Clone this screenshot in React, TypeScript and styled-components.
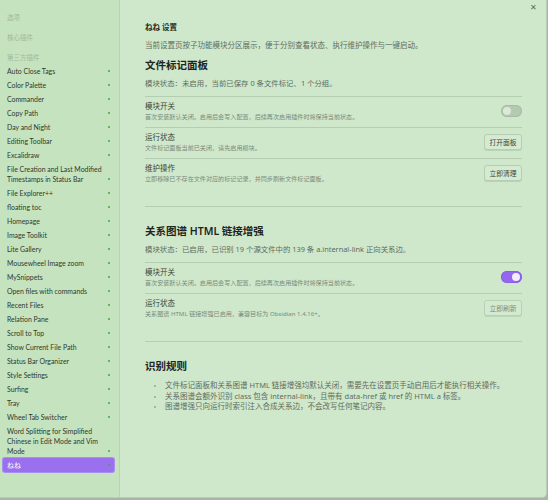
import React from "react";
import styled, { createGlobalStyle } from "styled-components";

const GlobalStyle = createGlobalStyle`
  html, body {
    margin: 0;
    padding: 0;
    background: #a9b3a7;
  }
  body {
    font-family: "Noto Sans", "Noto Sans CJK SC", sans-serif;
    -webkit-font-smoothing: antialiased;
  }
`;

const Stage = styled.div`
  width: 548px;
  height: 500px;
  overflow: hidden;
`;

const Modal = styled.div`
  position: relative;
  display: flex;
  width: 546px;
  height: 497px;
  background: #cfe8cb;
  border-right: 1px solid #bccbb9;
  border-bottom: 1px solid #bccbb9;
  border-bottom-right-radius: 5px;
  overflow: hidden;
`;

const Sidebar = styled.nav`
  width: 120px;
  flex-shrink: 0;
  background: #c6e3bf;
  border-right: 1px solid #b8d5b2;
  padding: 12px 0 0;
  box-sizing: border-box;
  font-family: Lato, "Noto Sans CJK SC", sans-serif;
`;

const GroupTitle = styled.div<{ $last?: boolean }>`
  font-family: "Noto Sans CJK SC", sans-serif;
  font-size: 6.5px;
  line-height: 10px;
  color: #9fb79b;
  padding: 0 7px;
  margin-bottom: ${({ $last }) => ($last ? "2px" : "10px")};
`;

const NavItem = styled.div<{ $active?: boolean }>`
  display: flex;
  align-items: flex-end;
  justify-content: space-between;
  margin: 0 5px 0 3px;
  padding: 2px 4px 2px 4px;
  border-radius: 2px;
  font-size: 6.9px;
  line-height: 10px;
  color: ${({ $active }) => ($active ? "#ffffff" : "#2d3a2c")};
  background: ${({ $active }) => ($active ? "#9b70ef" : "transparent")};
  box-shadow: ${({ $active }) => ($active ? "0 0 0 1px #a98ff2" : "none")};
`;

const NavLabel = styled.span`
  flex: 1;
`;

const Dot = styled.span`
  width: 2px;
  height: 2px;
  border-radius: 50%;
  background: #3aa846;
  margin: 0 0 4px 3px;
  flex-shrink: 0;
`;

const Content = styled.main`
  flex: 1;
  padding: 22px 24px 0 25px;
  color: #262b25;
`;

const CloseButton = styled.div`
  position: absolute;
  top: 2px;
  right: 9px;
  font-size: 8px;
  line-height: 10px;
  color: #5c6a5a;
`;

const PageTitle = styled.div`
  font-size: 7.5px;
  line-height: 10px;
  font-weight: 700;
`;

const Lead = styled.div`
  font-size: 7.5px;
  line-height: 10px;
  color: #5f6c5d;
  margin-top: 8px;
`;

const Section = styled.section<{ $divided?: boolean }>`
  padding-bottom: ${({ $divided }) => ($divided ? "17px" : "0")};
  border-bottom: ${({ $divided }) => ($divided ? "1px solid #b5cdb1" : "none")};
  margin-bottom: 17px;
`;

const Heading = styled.h2<{ $first?: boolean }>`
  margin: ${({ $first }) => ($first ? "8px" : "0")} 0 0;
  font-size: 10.5px;
  line-height: 14px;
  font-weight: 600;
  color: #1f241e;
`;

const Status = styled.div`
  font-size: 7.4px;
  line-height: 10px;
  color: #5f6c5d;
  margin: 6px 0 8px;
`;

const SettingRow = styled.div`
  display: flex;
  align-items: center;
  justify-content: space-between;
  border-top: 1px solid #b5cdb1;
  padding: 4px 0 6px;
`;

const SettingInfo = styled.div`
  display: flex;
  flex-direction: column;
  gap: 2px;
`;

const SettingName = styled.div`
  font-size: 7.5px;
  line-height: 10px;
  color: #3a4538;
`;

const SettingDesc = styled.div`
  font-size: 6.1px;
  line-height: 8px;
  color: #7b8a79;
`;

const Toggle = styled.div<{ $on?: boolean }>`
  width: 21px;
  height: 12px;
  border-radius: 6px;
  box-sizing: border-box;
  padding: 2px;
  display: flex;
  justify-content: ${({ $on }) => ($on ? "flex-end" : "flex-start")};
  background: ${({ $on }) => ($on ? "#9367ee" : "#b5c8b1")};
  box-shadow: inset 0 0 0 1px ${({ $on }) => ($on ? "#8a5fe8" : "#a9bda5")};
  &::after {
    content: "";
    width: 8px;
    height: 8px;
    border-radius: 50%;
    background: ${({ $on }) => ($on ? "#f3eefd" : "#dbe9d8")};
  }
`;

const ActionButton = styled.button<{ $muted?: boolean }>`
  width: 38px;
  height: 16px;
  padding: 0;
  border: 1px solid #b7ccb3;
  border-radius: 3px;
  background: #d5ebd1;
  box-shadow: 0 1px 0 rgba(120, 150, 115, 0.25);
  font-family: inherit;
  font-size: 6.8px;
  color: ${({ $muted }) => ($muted ? "#6f7d6d" : "#3d473b")};
  opacity: ${({ $muted }) => ($muted ? 0.85 : 1)};
`;

const RuleList = styled.ul`
  margin: 7px 0 0;
  padding: 0 0 0 20px;
  list-style: disc;
`;

const RuleItem = styled.li`
  font-size: 7.5px;
  line-height: 10.5px;
  color: #5f6c5d;
  &::marker {
    color: #97a595;
    font-size: 6px;
  }
`;

const plugins = [
  "Auto Close Tags",
  "Color Palette",
  "Commander",
  "Copy Path",
  "Day and Night",
  "Editing Toolbar",
  "Excalidraw",
  "File Creation and Last Modified Timestamps in Status Bar",
  "File Explorer++",
  "floating toc",
  "Homepage",
  "Image Toolkit",
  "Lite Gallery",
  "Mousewheel Image zoom",
  "MySnippets",
  "Open files with commands",
  "Recent Files",
  "Relation Pane",
  "Scroll to Top",
  "Show Current File Path",
  "Status Bar Organizer",
  "Style Settings",
  "Surfing",
  "Tray",
  "Wheel Tab Switcher",
  "Word Splitting for Simplified Chinese in Edit Mode and Vim Mode",
];

const toggleDesc = "首次安装默认关闭。启用后会写入配置，后续再次启用插件时将保持当前状态。";

const App: React.FC = () => {
  return (
    <Stage>
      <GlobalStyle />
      <Modal>
        <Sidebar>
          <GroupTitle>选项</GroupTitle>
          <GroupTitle>核心插件</GroupTitle>
          <GroupTitle $last>第三方插件</GroupTitle>
          {plugins.map((name) => (
            <NavItem key={name}>
              <NavLabel>{name}</NavLabel>
              <Dot />
            </NavItem>
          ))}
          <NavItem $active>
            <NavLabel>ねね</NavLabel>
            <Dot />
          </NavItem>
        </Sidebar>

        <Content>
          <CloseButton>✕</CloseButton>
          <PageTitle>ねね 设置</PageTitle>
          <Lead>当前设置页按子功能模块分区展示，便于分别查看状态、执行维护操作与一键启动。</Lead>

          <Section $divided>
            <Heading $first>文件标记面板</Heading>
            <Status>模块状态：未启用，当前已保存 0 条文件标记、1 个分组。</Status>
            <SettingRow>
              <SettingInfo>
                <SettingName>模块开关</SettingName>
                <SettingDesc>{toggleDesc}</SettingDesc>
              </SettingInfo>
              <Toggle />
            </SettingRow>
            <SettingRow>
              <SettingInfo>
                <SettingName>运行状态</SettingName>
                <SettingDesc>文件标记面板当前已关闭，请先启用模块。</SettingDesc>
              </SettingInfo>
              <ActionButton>打开面板</ActionButton>
            </SettingRow>
            <SettingRow>
              <SettingInfo>
                <SettingName>维护操作</SettingName>
                <SettingDesc>立即移除已不存在文件对应的标记记录，并同步刷新文件标记面板。</SettingDesc>
              </SettingInfo>
              <ActionButton>立即清理</ActionButton>
            </SettingRow>
          </Section>

          <Section $divided>
            <Heading>关系图谱 HTML 链接增强</Heading>
            <Status>模块状态：已启用，已识别 19 个源文件中的 139 条 a.internal-link 正向关系边。</Status>
            <SettingRow>
              <SettingInfo>
                <SettingName>模块开关</SettingName>
                <SettingDesc>{toggleDesc}</SettingDesc>
              </SettingInfo>
              <Toggle $on />
            </SettingRow>
            <SettingRow>
              <SettingInfo>
                <SettingName>运行状态</SettingName>
                <SettingDesc>关系图谱 HTML 链接增强已启用，兼容目标为 Obsidian 1.4.16+。</SettingDesc>
              </SettingInfo>
              <ActionButton $muted>立即刷新</ActionButton>
            </SettingRow>
          </Section>

          <Section>
            <Heading>识别规则</Heading>
            <RuleList>
              <RuleItem>文件标记面板和关系图谱 HTML 链接增强均默认关闭，需要先在设置页手动启用后才能执行相关操作。</RuleItem>
              <RuleItem>关系图谱会额外识别 class 包含 internal-link，且带有 data-href 或 href 的 HTML a 标签。</RuleItem>
              <RuleItem>图谱增强只向运行时索引注入合成关系边，不会改写任何笔记内容。</RuleItem>
            </RuleList>
          </Section>
        </Content>
      </Modal>
    </Stage>
  );
};

export default App;
